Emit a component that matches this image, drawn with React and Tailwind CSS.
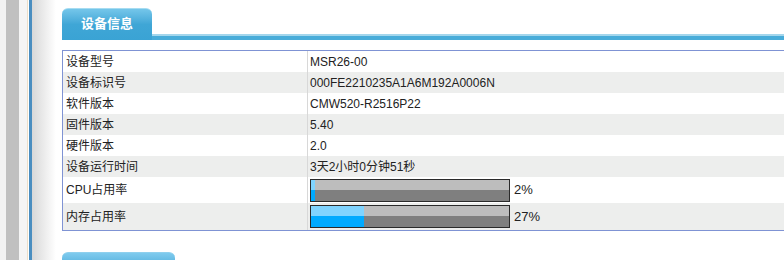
import React from "react";

const rows = [
  { label: "设备型号", value: "MSR26-00" },
  { label: "设备标识号", value: "000FE2210235A1A6M192A0006N" },
  { label: "软件版本", value: "CMW520-R2516P22" },
  { label: "固件版本", value: "5.40" },
  { label: "硬件版本", value: "2.0" },
  { label: "设备运行时间", value: "3天2小时0分钟51秒" },
];

function Bar({ pct }) {
  return (
    <div className="flex items-center gap-[4px]">
      <div className="flex h-[23px] w-[200px] border border-[#2a2a2a] bg-[#808080]">
        <div className="flex flex-col" style={{ width: `${pct}%` }}>
          <div className="h-[10px] bg-[#80d4ff]" />
          <div className="flex-1 bg-[#00aaff]" />
        </div>
        <div className="flex flex-1 flex-col">
          <div className="h-[10px] bg-[#bdbdbd]" />
          <div className="flex-1 bg-[#7f7f7f]" />
        </div>
      </div>
      <span className="text-[13px] text-[#222]">{pct}%</span>
    </div>
  );
}

export default function App() {
  return (
    <div
      className="flex h-[260px] w-[784px] overflow-hidden bg-white text-[12px] text-[#222]"
      style={{ fontFamily: '"Liberation Sans", "Noto Sans CJK SC", sans-serif' }}
    >
      <div className="w-[6px] shrink-0 bg-[#f2f2f2]" />
      <div className="w-[13px] shrink-0 bg-[#c0c0c0]" />
      <div className="w-[8px] shrink-0 bg-[#f5f5f5]" />
      <div className="w-[1px] shrink-0 bg-[#ecdfc9]" />
      <div className="w-[1px] shrink-0 bg-white" />
      <div className="w-[3px] shrink-0 bg-[#4a8ec0]" />
      <div className="w-[24px] shrink-0 bg-gradient-to-r from-[#d8d8d8] to-white" />
      <div className="flex min-w-0 flex-1 flex-col pl-[6px] pt-[8px]">
        {/* tab header */}
        <div className="flex h-[32px] items-end">
          <div className="flex h-[32px] w-[90px] shrink-0 items-center justify-center rounded-t-[6px] border-t border-[#a6dcf1] bg-gradient-to-b from-[#74c6ea] via-[#3fa6d6] to-[#3aa3d4] pb-[1px] text-[13px] font-bold text-white">
            设备信息
          </div>
          <div className="flex h-[6px] flex-1 flex-col">
            <div className="h-[2px] bg-[#a3d6ec]" />
            <div className="flex-1 bg-[#48acd9]" />
          </div>
        </div>
        {/* table */}
        <div className="mt-[10px] w-[740px] shrink-0 border border-[#7f93d4]">
          {rows.map((r, i) => (
            <div
              key={r.label}
              className={`flex h-[21px] items-center ${i % 2 === 1 ? "bg-[#edeeed]" : "bg-white"}`}
            >
              <div className="flex h-full w-[244px] items-center pl-[3px]">{r.label}</div>
              <div className="flex h-full flex-1 items-center border-l border-[#d8d8d8] pl-[2px]">{r.value}</div>
            </div>
          ))}
          <div className="flex h-[26px] items-center bg-white">
            <div className="flex h-full w-[244px] items-center pl-[3px]">CPU占用率</div>
            <div className="flex h-full flex-1 items-center border-l border-[#d8d8d8] pl-[2px]">
              <Bar pct={2} />
            </div>
          </div>
          <div className="flex h-[27px] items-center bg-[#edeeed]">
            <div className="flex h-full w-[244px] items-center pl-[3px]">内存占用率</div>
            <div className="flex h-full flex-1 items-center border-l border-[#d8d8d8] pl-[2px]">
              <Bar pct={27} />
            </div>
          </div>
        </div>
        {/* next tab */}
        <div className="mt-[21px] h-[20px] w-[113px] shrink-0 rounded-t-[6px] border-t border-[#8fd0ee] bg-gradient-to-b from-[#7fcbee] to-[#3aa3d4]" />
      </div>
    </div>
  );
}
